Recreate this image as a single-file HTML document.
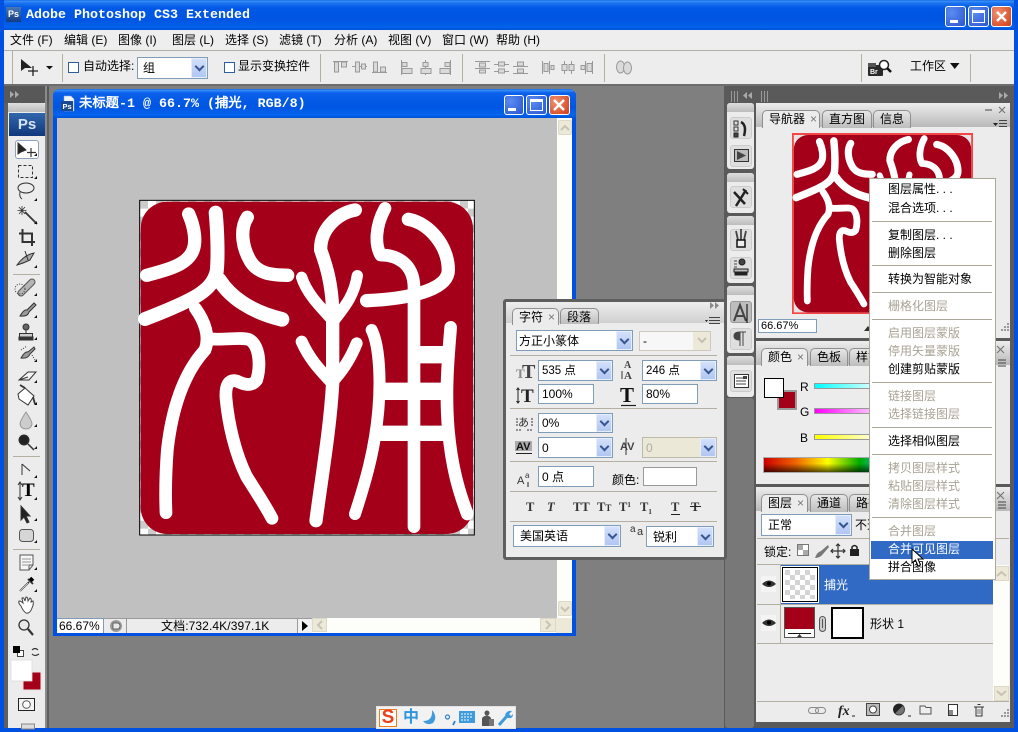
<!DOCTYPE html>
<html><head><meta charset="utf-8"><title>Adobe Photoshop CS3 Extended</title>
<style>
html,body{margin:0;padding:0}
body{width:1018px;height:732px;overflow:hidden;position:relative;background:#7f7f7f;font:12px/14px "Liberation Sans","WenQuanYi Zen Hei","Noto Sans CJK SC",sans-serif;color:#000}
div,span,b,i{box-sizing:border-box}
.a{position:absolute}
.t{position:absolute;white-space:nowrap;line-height:14px}
svg{position:absolute;overflow:visible}
.sel{position:absolute;background:#fff;border:1px solid #7f9db9}
.sel span{position:absolute;left:3px;top:50%;margin-top:-7px;white-space:nowrap;font-size:12px;line-height:14px}
.sel b{position:absolute;right:0;top:0;bottom:0;width:16px;background:linear-gradient(#d3e0fb,#b1c6f3);border:1px solid #e6eefc}
.sel b:after{content:"";position:absolute;left:4px;top:50%;margin-top:-5px;width:5px;height:5px;border-right:2px solid #37558f;border-bottom:2px solid #37558f;transform:rotate(45deg)}
.inp{position:absolute;background:#fff;border:1px solid #7f9db9}
.inp span{position:absolute;left:3px;top:50%;margin-top:-7px;white-space:nowrap}
.sep{position:absolute;height:1px;background:#b3afa3}
.vs{position:absolute;width:1px;background:#b3afa3;top:54px;height:28px}
.btn{position:absolute;border-radius:3px;border:1px solid #fff}
.panel{position:absolute;background:#ececec;left:756px;width:254px}
.head{position:absolute;left:0;right:0;top:0;height:24px;background:linear-gradient(#ededed,#b9b9b9)}
.tab{position:absolute;height:18px;border:1px solid #8f8f8f;border-bottom:0;border-radius:5px 5px 0 0;background:linear-gradient(#e6e6e6,#bdbdbd);font-size:12px;line-height:16px;padding-left:6px;white-space:nowrap}
.tab.on{background:#ececec}
.tab i{font-style:normal;color:#777;margin-left:5px}
.menu{position:absolute;left:869px;top:178px;width:127px;height:402px;background:#fff;border:1px solid #aca899;z-index:20}
.menu .m{position:absolute;left:18px;white-space:nowrap;line-height:14px}
.menu .g{color:#a7a394}
.menu .s{position:absolute;left:2px;right:3px;height:1px;background:#aca899}
.strip{position:absolute;left:727px;width:27px;background:#ececec;border-radius:3px}
.strip .grab{position:absolute;left:0;right:0;top:0;height:9px;background:linear-gradient(#dedede,#bcbcbc);border-radius:3px 3px 0 0}
.ib{position:absolute;left:3px;width:22px;height:22px;border:1px solid #ccc;border-radius:3px;background:#dfdfdf}
</style></head><body>

<!-- title bar -->
<div class="a" style="left:0;top:0;width:1018px;height:30px;background:linear-gradient(#0a5fe0 0,#3b91f7 1px,#1c74f0 3px,#0058e6 8px,#0055e2 20px,#0262ea 27px,#0050d8 30px)"></div>
<div class="a" style="left:0;top:0;width:4px;height:732px;background:#0050e2"></div>
<div class="a" style="left:1014px;top:0;width:4px;height:732px;background:#0050e2"></div>
<div class="a" style="left:0;top:728px;width:1018px;height:4px;background:#0050e2"></div>
<div class="a" style="left:6px;top:7px;width:15px;height:15px;background:linear-gradient(#4a78b6,#123c80);color:#fff;font:bold 9px/15px 'Liberation Sans';text-align:center">Ps</div>
<div class="t" style="left:26px;top:9px;color:#fff;font:bold 13.33px/14px 'Liberation Mono',monospace">Adobe Photoshop CS3 Extended</div>
<div class="btn" style="left:945px;top:6px;width:21px;height:21px;background:radial-gradient(circle at 30% 30%,#5a8cf0,#2a55d0)"><div class="a" style="left:4px;top:13px;width:8px;height:3px;background:#fff"></div></div>
<div class="btn" style="left:968px;top:6px;width:21px;height:21px;background:radial-gradient(circle at 30% 30%,#5a8cf0,#2a55d0)"><div class="a" style="left:3px;top:3px;width:13px;height:13px;border:1px solid #fff;border-top:3px solid #fff"></div></div>
<div class="btn" style="left:991px;top:6px;width:21px;height:21px;background:radial-gradient(circle at 30% 30%,#ef9070,#d03c18)"><svg style="left:0;top:0" width="19" height="19"><path d="M5 5L14 14M14 5L5 14" stroke="#fff" stroke-width="2.4"/></svg></div>

<!-- menu bar -->
<div class="a" style="left:4px;top:30px;width:1010px;height:21px;background:#eeeeee;border-bottom:1px solid #b0b0a8"></div>
<div class="t" style="left:10px;top:33px">文件 (F)</div>
<div class="t" style="left:64px;top:33px">编辑 (E)</div>
<div class="t" style="left:118px;top:33px">图像 (I)</div>
<div class="t" style="left:172px;top:33px">图层 (L)</div>
<div class="t" style="left:225px;top:33px">选择 (S)</div>
<div class="t" style="left:279px;top:33px">滤镜 (T)</div>
<div class="t" style="left:334px;top:33px">分析 (A)</div>
<div class="t" style="left:388px;top:33px">视图 (V)</div>
<div class="t" style="left:442px;top:33px">窗口 (W)</div>
<div class="t" style="left:496px;top:33px">帮助 (H)</div>

<!-- options bar -->
<div class="a" style="left:4px;top:51px;width:1010px;height:33px;background:#ededed"></div>
<div class="a" style="left:4px;top:84px;width:1010px;height:2px;background:#6d6d6d"></div>
<div class="a" style="left:12px;top:51px;width:1px;height:33px;background:#b3afa3"></div>
<div class="vs" style="left:62px"></div><div class="vs" style="left:320px"></div><div class="vs" style="left:462px"></div><div class="vs" style="left:604px"></div><div class="vs" style="left:861px"></div><div class="vs" style="left:970px"></div>
<svg style="left:0;top:0" width="60" height="85"><path d="M21 59L21 71L25 68L32 68Z" fill="#222"/><path d="M33 66V76M28 71H38" stroke="#222" stroke-width="1.3"/><path d="M46 66H53L49.500 69.500Z" fill="#111"/></svg>
<div class="a" style="left:68px;top:62px;width:11px;height:11px;background:#fff;border:1px solid #2f5f9a"></div>
<div class="t" style="left:83px;top:59px">自动选择:</div>
<div class="sel" style="left:137px;top:57px;width:71px;height:22px"><span style="left:5px">组</span><b style="width:16px"></b></div>
<div class="a" style="left:224px;top:62px;width:11px;height:11px;background:#fff;border:1px solid #2f5f9a"></div>
<div class="t" style="left:238px;top:59px">显示变换控件</div>
<svg style="left:325px;top:52px" width="320" height="30" fill="#dadada" stroke="#999" stroke-width="1">
<g transform="translate(8,9)"><path d="M0 .5H15" fill="none"/><rect x="1.500" y="1" width="4" height="10"/><rect x="8.500" y="1" width="5" height="5"/></g>
<g transform="translate(27,9)"><path d="M0 5.500H15" fill="none"/><rect x="3.500" y="1" width="4" height="10"/><rect x="9.500" y="3" width="4" height="5"/></g>
<g transform="translate(47,9)"><path d="M0 11.500H15" fill="none"/><rect x="1.500" y="1" width="4" height="10"/><rect x="8.500" y="6" width="5" height="5"/></g>
<g transform="translate(76,8)"><path d="M.5 0V15" fill="none"/><rect x="1" y="8.500" width="10" height="5"/><rect x="1" y="2.500" width="5" height="4"/></g>
<g transform="translate(95,8)"><path d="M5.500 0V15" fill="none"/><rect x="1" y="8.500" width="10" height="5"/><rect x="3" y="2.500" width="5" height="4"/></g>
<g transform="translate(114,8)"><path d="M11.500 0V15" fill="none"/><rect x="1" y="8.500" width="10" height="5"/><rect x="6" y="2.500" width="5" height="4"/></g>
<g transform="translate(150,9)"><path d="M0 .5H15M0 7.500H15" fill="none"/><rect x="4.500" y="2" width="6" height="4"/><rect x="4.500" y="9" width="6" height="3"/></g>
<g transform="translate(169,9)"><path d="M0 3.500H15M0 10.500H15" fill="none"/><rect x="4.500" y="1" width="6" height="4"/><rect x="4.500" y="8" width="6" height="4"/></g>
<g transform="translate(188,9)"><path d="M0 5.500H15M0 12.500H15" fill="none"/><rect x="4.500" y="1" width="6" height="4"/><rect x="4.500" y="8" width="6" height="4"/></g>
<g transform="translate(217,8)"><path d="M.5 1V14M7.500 1V14" fill="none"/><rect x="2" y="3.500" width="4" height="8"/><rect x="9" y="5.500" width="3" height="4"/></g>
<g transform="translate(236,8)"><path d="M3.500 1V14M10.500 1V14" fill="none"/><rect x="1" y="4.500" width="5" height="6"/><rect x="8" y="4.500" width="5" height="6"/></g>
<g transform="translate(255,8)"><path d="M5.500 1V14M12.500 1V14" fill="none"/><rect x="1" y="5.500" width="4" height="4"/><rect x="7" y="3.500" width="5" height="8"/></g>
<g transform="translate(291,8)"><ellipse cx="4.500" cy="7" rx="4" ry="6"/><ellipse cx="11.500" cy="8" rx="4" ry="6"/></g>
</svg>
<svg style="left:868px;top:59px" width="26" height="18"><rect x="0" y="6" width="15" height="11" rx="1" fill="#2a2a2a"/><rect x="0" y="4" width="8" height="4" fill="#555"/><text x="2" y="15" font-family="Liberation Sans" font-weight="bold" font-size="7" fill="#fff">Br</text><circle cx="16" cy="6" r="4.500" fill="#fff" stroke="#222" stroke-width="1.5"/><path d="M19 9L23 13" stroke="#111" stroke-width="2.500"/></svg>
<div class="t" style="left:910px;top:59px">工作区</div>
<svg style="left:950px;top:63px" width="10" height="7"><path d="M0 0H9.500L4.750 6Z" fill="#111"/></svg>

<!-- toolbox -->
<div class="a" style="left:4px;top:86px;width:45px;height:642px;background:#5f5f5f"></div>
<div class="a" style="left:4px;top:86px;width:45px;height:17px;background:#585858"></div>
<svg style="left:10px;top:91px" width="12" height="8"><path d="M0 0L4 3.500L0 7ZM5 0L9 3.500L5 7Z" fill="#aaa"/></svg>
<div class="a" style="left:8px;top:103px;width:37px;height:625px;background:#ececec"></div>
<div class="a" style="left:8px;top:103px;width:37px;height:9px;background:linear-gradient(#dedede,#bcbcbc);border-radius:3px 3px 0 0"></div>
<div class="a" style="left:45px;top:86px;width:2px;height:642px;background:#8a8a8a"></div>
<div class="a" style="left:9px;top:113px;width:36px;height:23px;background:linear-gradient(#3166ac,#11387c);color:#d8e4f5;font:bold 15px/23px 'Liberation Sans';text-align:center">Ps</div>
<div class="a" style="left:15px;top:140px;width:24px;height:19px;background:#fff;border:1px solid #8da2b8;border-radius:3px"></div>
<svg style="left:0;top:0;z-index:2" width="60" height="732" fill="none" stroke="#333" stroke-width="1">
<path d="M18 143V154L21 152L26 150Z" fill="#222"/><path d="M31 148V157M27 152.500H36" stroke-width="1.200"/>
<rect x="18.500" y="165.500" width="14" height="12" stroke-dasharray="3 2"/>
<ellipse cx="26" cy="188" rx="8" ry="5"/><path d="M20 192Q19 197 22 199"/>
<path d="M25 212L37 224" stroke-width="1.800"/><path d="M22 206V215M17.500 210.500H26.500M19 207L25 214M25 207L19 214" stroke-width=".8"/>
<path d="M19 233.500H32V246M22.500 229V242H35" stroke-width="2"/>
<path d="M17 265Q24 255 34 253L30 260Q24 263 17 265Z" fill="#aaa"/><path d="M25 251L28 260"/>
<path d="M21 293L32 282" stroke="#555" stroke-width="7" stroke-linecap="round"/><path d="M21 293L32 282" stroke="#b5b5b5" stroke-width="5" stroke-linecap="round"/><circle cx="20" cy="289" r="5" stroke-dasharray="1 1.500"/>
<path d="M20 316Q24 309 27 310L34 303L36 305L29 312Q28 317 20 316Z" fill="#999"/>
<circle cx="26" cy="327" r="3" fill="#666"/><path d="M26 330V333"/><rect x="19.500" y="333.500" width="13" height="4" fill="#ccc"/><rect x="19" y="337" width="14" height="3" fill="#333"/>
<path d="M21 358Q25 351 28 352L34 347L35 349L30 354Q28 359 21 358Z" fill="#999"/><path d="M21 350L27 346M32 355L35 360" stroke-dasharray="1 1.500"/>
<path d="M19 380L28 372H36L29 380ZM19 380L28 377" fill="#f4f4f4"/>
<path d="M18 394L25 388L34 396L28 405L19 399Z" fill="#fff"/><path d="M25 388L20 385" stroke-width="1.800"/><path d="M33 397L35 404" stroke-width="1.800"/>
<path d="M26 412Q20 421 20 424Q21 429 26 429Q31 429 32 424Q32 421 26 412Z" fill="#ccc" stroke="#999"/>
<circle cx="24" cy="440" r="5" fill="#222"/><path d="M28 444L34 450" stroke-width="1.500"/>
<path d="M22 464V475M22 464L30 471"/>
<path d="M20 483V499M18 485L20 482L22 485M18 497L20 500L22 497" stroke-width="1"/>
<path d="M21 506V520L24 517L27 523L29 522L26 516L30 516Z" fill="#222"/>
<rect x="19.500" y="529.500" width="14" height="12" rx="3" fill="#d6d6d6" stroke="#555"/>
<path d="M20 555H33V565L29 570H20Z" fill="#f6f6f6" stroke="#555"/><path d="M22 559H31M22 562H31M22 565H28" stroke="#777" stroke-width=".8"/><path d="M29 570V565H33" stroke="#555"/>
<path d="M20 591L29 582M28 579L33 584" stroke-width="1.800"/><path d="M30 578L33 581" stroke="#000" stroke-width="3.500"/><path d="M20 591L28 583" stroke="#fff" stroke-width=".6"/>
<path d="M21 606Q18 603 19 601Q21 601 23 603L22 598Q24 597 25 601L26 597Q28 597 28 601L30 598Q32 599 31 602L33 601Q34 604 32 608Q30 614 26 613Q23 611 21 606Z" fill="#fff" stroke="#444"/>
<circle cx="24" cy="625" r="5" fill="#e8e8e8" stroke-width="1.300"/><path d="M28 629L33 635" stroke-width="2.200"/>
<path d="M32 650Q35 647 38 650M39 654Q35 657 32 654" stroke-width="1.200"/>
<rect x="17.500" y="650.500" width="6" height="6" fill="#fff" stroke="#444"/><rect x="13" y="646" width="7" height="7" fill="#000" stroke="none"/>
<rect x="22.500" y="671.500" width="19" height="19" fill="#a50019" stroke="#e8e8e8" stroke-width="2"/>
<rect x="11" y="660" width="21" height="21" fill="#fff" stroke="#ddd" stroke-width=".8"/>
<rect x="18.500" y="698.500" width="16" height="12" fill="#f4f4f4" stroke="#222"/><circle cx="26.500" cy="704.500" r="3.800" fill="#fff" stroke="#555"/>
<rect x="21.500" y="724" width="13" height="5" fill="#ddd" stroke="#888"/>
</svg>
<svg style="left:0;top:0;z-index:2" width="60" height="732" fill="#111">
<path d="M37 156v-3l-3 3zM37 179v-3l-3 3zM37 201v-3l-3 3zM37 224v-3l-3 3zM37 268v-3l-3 3zM37 296v-3l-3 3zM37 318v-3l-3 3zM37 340v-3l-3 3zM37 362v-3l-3 3zM37 383v-3l-3 3zM37 405v-3l-3 3zM37 427v-3l-3 3zM37 449v-3l-3 3zM37 478v-3l-3 3zM37 500v-3l-3 3zM37 521v-3l-3 3zM37 543v-3l-3 3zM37 570v-3l-3 3zM37 592v-3l-3 3z"/>
<rect x="13" y="274" width="27" height="1" fill="#b3afa3"/><rect x="13" y="456" width="27" height="1" fill="#b3afa3"/><rect x="13" y="549" width="27" height="1" fill="#b3afa3"/>
</svg>
<div class="t" style="left:22px;top:481px;font:bold 19px/20px 'Liberation Serif',serif;z-index:3">T</div>

<!-- document window -->
<div class="a" style="left:53px;top:89px;width:523px;height:547px;background:#0050e2;border-radius:7px 7px 0 0"></div>
<div class="a" style="left:53px;top:89px;width:523px;height:29px;border-radius:7px 7px 0 0;background:linear-gradient(#0a5fe0 0,#3b91f7 1px,#0a60ea 4px,#0055e2 18px,#0264ec 26px,#0050d8 29px)"></div>
<svg style="left:61px;top:96px" width="14" height="16"><path d="M3 0H10L13 3V15H3Z" fill="#f0f4fa" stroke="#8fa8cc" stroke-width=".5"/><rect x="0" y="5" width="12" height="10" fill="#1c4a8c"/><text x="1.500" y="13" font-family="Liberation Sans" font-weight="bold" font-size="7.500" fill="#fff">Ps</text></svg>
<div class="t" style="left:79px;top:98px;color:#fff;font:bold 13.33px/14px 'Liberation Mono','WenQuanYi Zen Hei',monospace">未标题-1 @ 66.7% (捕光, RGB/8)</div>
<div class="btn" style="left:504px;top:95px;width:20px;height:20px;background:radial-gradient(circle at 30% 30%,#5a8cf0,#2a55d0)"><div class="a" style="left:3px;top:12px;width:8px;height:3px;background:#fff"></div></div>
<div class="btn" style="left:526px;top:95px;width:21px;height:20px;background:radial-gradient(circle at 30% 30%,#5a8cf0,#2a55d0)"><div class="a" style="left:3px;top:3px;width:13px;height:12px;border:1px solid #fff;border-top:3px solid #fff"></div></div>
<div class="btn" style="left:549px;top:95px;width:21px;height:20px;background:radial-gradient(circle at 30% 30%,#ef9070,#d03c18)"><svg style="left:0;top:0" width="19" height="18"><path d="M4 4L14 14M14 4L4 14" stroke="#fff" stroke-width="2.400"/></svg></div>
<div class="a" style="left:57px;top:118px;width:500px;height:500px;background:#c0c0c0"></div>
<div class="a" style="left:557px;top:118px;width:15px;height:500px;background:#fdfdf9"></div>
<div class="a" style="left:558px;top:120px;width:14px;height:15px;background:#ece9d8;border:1px solid #dcd9c8;border-radius:2px"></div>
<div class="a" style="left:558px;top:601px;width:14px;height:15px;background:#ece9d8;border:1px solid #dcd9c8;border-radius:2px"></div>
<svg style="left:558px;top:120px" width="14" height="500" fill="none" stroke="#c7c4b4" stroke-width="2"><path d="M3 10L7 6L11 10M3 487L7 491L11 487"/></svg>
<!-- status -->
<div class="a" style="left:57px;top:618px;width:515px;height:15px;background:#ececec;border-top:1px solid #9a9a9a"></div>
<div class="a" style="left:57px;top:618px;width:47px;height:15px;background:#fff;border-right:1px solid #7f9db9;border-top:1px solid #7f9db9;font-size:12px;line-height:14px;padding-left:2px">66.67%</div>
<div class="a" style="left:126px;top:619px;width:1px;height:14px;background:#9a9a9a"></div>
<svg style="left:109px;top:619px" width="14" height="14"><circle cx="7" cy="7" r="6" fill="#9a9a9a"/><path d="M4 10V4H8Q11 4 11 7Q11 10 8 10Z" fill="#e8e8e8" stroke="#444" stroke-width=".7"/></svg>
<div class="t" style="left:161px;top:619px;letter-spacing:.1px">文档:732.4K/397.1K</div>
<div class="a" style="left:297px;top:619px;width:15px;height:14px;background:#f2f2f2;border-left:1px solid #9a9a9a"></div>
<svg style="left:302px;top:621px" width="7" height="11"><path d="M0 0L6 5L0 10Z" fill="#000"/></svg>
<div class="a" style="left:312px;top:618px;width:260px;height:15px;background:#fdfdf9"></div>
<div class="a" style="left:312px;top:618px;width:15px;height:14px;background:#ece9d8;border:1px solid #dcd9c8"></div>
<div class="a" style="left:540px;top:618px;width:16px;height:14px;background:#ece9d8;border:1px solid #dcd9c8"></div>
<div class="a" style="left:556px;top:618px;width:16px;height:15px;background:#ece9d8"></div>
<svg style="left:312px;top:618px" width="260" height="15" fill="none" stroke="#c7c4b4" stroke-width="2"><path d="M10 3L6 7L10 11M234 3L238 7L234 11"/></svg>

<!-- canvas -->
<svg style="left:130px;top:190px" width="360" height="360" viewBox="0 0 1080 1080">
<defs><pattern id="ck" width="48" height="48" patternUnits="userSpaceOnUse" x="30" y="32"><rect width="48" height="48" fill="#fff"/><rect width="24" height="24" fill="#ccc"/><rect x="24" y="24" width="24" height="24" fill="#ccc"/></pattern></defs>
<rect x="29" y="31" width="1004" height="1004" fill="url(#ck)" stroke="#000" stroke-width="3"/>
<rect x="32" y="35" width="997" height="997" rx="80" fill="#a50019"/>
<g fill="none" stroke="#fff" stroke-width="40" stroke-linecap="round" stroke-linejoin="round">
<path d="M176 72C195 115 198 155 190 178C175 225 110 240 50 256"/>
<path d="M257 68C262 120 265 200 260 245C245 300 205 325 45 387" stroke-width="42"/>
<path d="M268 270C300 320 360 365 456 388" stroke-width="44"/>
<path d="M352 82C330 115 335 170 362 215C385 250 420 255 473 256"/>
<path d="M196 355C225 395 240 440 225 480C160 550 125 660 112 780C106 860 106 920 108 968" stroke-width="38"/>
<path d="M245 447C290 450 340 440 360 450C390 470 392 530 380 570C365 590 345 585 320 573C300 568 285 580 288 625C295 700 315 790 350 860C375 900 405 945 426 985" stroke-width="38"/>
<path d="M676 60C620 70 570 120 572 180C590 230 605 280 608 360V580C600 720 575 860 558 992"/>
<path d="M515 262C530 310 570 350 605 388" stroke-width="34"/><path d="M682 257C672 320 640 355 612 392" stroke-width="34"/>
<path d="M515 455C540 510 570 540 605 578" stroke-width="36"/><path d="M680 460C660 510 635 545 610 572" stroke-width="36"/>
<path d="M765 55C735 110 735 165 752 195C800 195 850 220 852 290V1010" stroke-width="38"/>
<path d="M835 88C900 100 955 170 955 240C955 290 870 325 710 332" stroke-width="40"/>
<path d="M725 420C750 470 752 580 745 660C735 780 705 880 675 972" stroke-width="36"/>
<path d="M962 412C955 500 945 600 955 720C965 830 985 900 1012 972" stroke-width="38"/>
<path d="M745 604H950" stroke-width="52" stroke-linecap="butt"/><path d="M745 730H950" stroke-width="46" stroke-linecap="butt"/><path d="M860 494H945" stroke-width="52" stroke-linecap="butt"/>
</g></svg>

<!-- right dock -->
<div class="a" style="left:724px;top:86px;width:290px;height:642px;background:#5a5a5a"></div>
<div class="a" style="left:725px;top:398px;width:29px;height:330px;background:#787878;border-radius:3px"></div>
<svg style="left:724px;top:86px" width="290" height="17"><path d="M7.500 5V16M10.500 5V16M13.500 5V16M37.500 5V16M40.500 5V16M43.500 5V16" stroke="#9a9a9a"/><path d="M28 6L24 9.500L28 13ZM23 6L19 9.500L23 13Z" fill="#aaa"/><path d="M275 6L279 9.500L275 13ZM280 6L284 9.500L280 13Z" fill="#aaa"/></svg>
<div class="strip" style="top:103px;height:66px"><div class="grab"></div><div class="ib" style="top:14px"></div><div class="ib" style="top:42px"></div></div>
<div class="strip" style="top:173px;height:40px"><div class="grab"></div><div class="ib" style="top:13px"></div></div>
<div class="strip" style="top:216px;height:67px"><div class="grab"></div><div class="ib" style="top:13px"></div><div class="ib" style="top:41px"></div></div>
<div class="strip" style="top:286px;height:67px"><div class="grab"></div><div class="ib" style="top:15px;background:#bdbdbd;border-color:#999"></div><div class="ib" style="top:42px"></div></div>
<div class="strip" style="top:356px;height:41px"><div class="grab"></div><div class="ib" style="top:14px"></div></div>
<svg style="left:727px;top:103px;z-index:2" width="27" height="300" fill="none" stroke="#222">
<rect x="7" y="18" width="4" height="4" stroke="#333"/><rect x="7" y="24" width="4" height="4" stroke="#333"/><rect x="7" y="30" width="4" height="4" fill="#444"/><path d="M14 19Q20 22 17 33" stroke-width="2.500"/>
<rect x="7.500" y="46.500" width="14" height="12" fill="#bbb" stroke="#333"/><path d="M10 48V57L19 52.500Z" fill="#444" stroke="none"/>
<path d="M7 89L18 101M19 87L9 103" stroke-width="2.500"/><path d="M16 86L21 91" stroke-width="2"/>
<path d="M9 128L11 137M19 128L17 137M14 126V137" stroke="#444" stroke-width="1.800"/><rect x="10" y="137" width="8" height="7" fill="#eee" stroke="#111" stroke-width="1.500"/>
<circle cx="15" cy="159" r="3" fill="#444"/><path d="M7 158H10M7 161H10M7 164H10" stroke="#444"/><rect x="7" y="166" width="14" height="3" fill="#bbb"/><rect x="8" y="169" width="12" height="3" fill="#222"/>
<path d="M7 218L13 202L19 218M9 213H17" stroke="#444" stroke-width="2"/><path d="M20 201V220" stroke="#000"/>
<path d="M16 229V243M13 229V243M12 229H19M13 229Q7 229 7 233Q7 237 13 237" fill="#444" stroke="#444"/>
<rect x="7.500" y="271.500" width="14" height="13" fill="#fff" stroke="#333"/><path d="M9 275H16M9 278H19M9 281H19" stroke="#444"/><rect x="16" y="273" width="4" height="3" fill="#444" stroke="none"/>
</svg>

<!-- navigator panel -->
<div class="panel" style="top:103px;height:235px;border-radius:3px 3px 0 0"><div class="head"></div>
<div class="tab on" style="left:6px;top:7px;width:58px">导航器<i>×</i></div>
<div class="tab" style="left:66px;top:7px;width:50px">直方图</div>
<div class="tab" style="left:117px;top:7px;width:38px">信息</div>
</div>
<svg style="left:985px;top:104px" width="25" height="26"><path d="M0 6H7" stroke="#777" stroke-width="1.500"/><path d="M14 3L20 9M20 3L14 9" stroke="#777" stroke-width="1.200"/><path d="M8 19H13L10.500 22Z" fill="#222"/><path d="M14 16.500H22M14 19.500H22M14 22.500H22" stroke="#444"/></svg>
<div class="a" style="left:792px;top:133px;width:181px;height:181px;background:#fff;border:2px solid #f44646"></div>
<svg style="left:794px;top:135px" width="177" height="177" viewBox="33 35 995 995">
<rect x="32" y="35" width="997" height="997" fill="#e4e4e4"/>
<rect x="32" y="35" width="997" height="997" rx="80" fill="#a50019"/>
<g fill="none" stroke="#fff" stroke-width="40" stroke-linecap="round" stroke-linejoin="round">
<path d="M176 72C195 115 198 155 190 178C175 225 110 240 50 256"/>
<path d="M257 68C262 120 265 200 260 245C245 300 205 325 45 387" stroke-width="42"/>
<path d="M268 270C300 320 360 365 456 388" stroke-width="44"/>
<path d="M352 82C330 115 335 170 362 215C385 250 420 255 473 256"/>
<path d="M196 355C225 395 240 440 225 480C160 550 125 660 112 780C106 860 106 920 108 968" stroke-width="38"/>
<path d="M245 447C290 450 340 440 360 450C390 470 392 530 380 570C365 590 345 585 320 573C300 568 285 580 288 625C295 700 315 790 350 860C375 900 405 945 426 985" stroke-width="38"/>
<path d="M676 60C620 70 570 120 572 180C590 230 605 280 608 360V580C600 720 575 860 558 992"/>
<path d="M515 262C530 310 570 350 605 388" stroke-width="34"/><path d="M682 257C672 320 640 355 612 392" stroke-width="34"/>
<path d="M765 55C735 110 735 165 752 195C800 195 850 220 852 290V1010" stroke-width="38"/>
<path d="M835 88C900 100 955 170 955 240C955 290 870 325 710 332"/>
</g></svg>
<div class="inp" style="left:758px;top:319px;width:59px;height:14px;font-size:11px"><span style="left:2px;font-size:11px">66.67%</span></div>
<svg style="left:864px;top:326px" width="8" height="6"><path d="M0 5L4 0L8 5Z" fill="#333"/></svg>
<svg style="left:998px;top:322px" width="12" height="12" fill="#999"><path d="M9 1h2v2h-2zM6 4h2v2h-2zM9 4h2v2h-2zM3 7h2v2h-2zM6 7h2v2h-2zM9 7h2v2h-2z"/></svg>

<!-- color panel -->
<div class="panel" style="top:341px;height:143px;border-radius:3px 3px 0 0"><div class="head"></div>
<div class="tab on" style="left:5px;top:7px;width:47px">颜色<i>×</i></div>
<div class="tab" style="left:54px;top:7px;width:38px">色板</div>
<div class="tab" style="left:93px;top:7px;width:40px">样式</div>
</div>
<svg style="left:996px;top:341px" width="14" height="26"><path d="M1 5L8 12M8 5L1 12" stroke="#777" stroke-width="1.200"/><path d="M2 22H10M2 19H10M2 25H10" stroke="#444"/></svg>
<div class="a" style="left:777px;top:390px;width:20px;height:20px;background:#a50019;border:2px solid #9a9a9a;outline:1px solid #eee"></div>
<div class="a" style="left:764px;top:378px;width:20px;height:20px;background:#fff;border:1px solid #000"></div>
<div class="t" style="left:800px;top:380px">R</div><div class="t" style="left:800px;top:405px">G</div><div class="t" style="left:800px;top:431px">B</div>
<div class="a" style="left:814px;top:383px;width:56px;height:6px;background:linear-gradient(90deg,#0ff,#cff);border:1px solid #999"></div>
<div class="a" style="left:814px;top:408px;width:56px;height:6px;background:linear-gradient(90deg,#f0f,#fbf);border:1px solid #999"></div>
<div class="a" style="left:814px;top:434px;width:56px;height:6px;background:linear-gradient(90deg,#ff0,#ffc);border:1px solid #999"></div>
<div class="a" style="left:763px;top:457px;width:225px;height:16px;border:1px solid #aaa;background:linear-gradient(90deg,#c00,#e60,#ff0,#0a0,#0cf,#00f,#f0f,#f00)"></div>
<div class="a" style="left:764px;top:458px;width:223px;height:14px;background:linear-gradient(#fff0 40%,#000a)"></div>

<!-- layers panel -->
<div class="panel" style="top:487px;height:235px;border-radius:3px 3px 0 0"><div class="head"></div>
<div class="tab on" style="left:5px;top:7px;width:47px">图层<i>×</i></div>
<div class="tab" style="left:54px;top:7px;width:38px">通道</div>
<div class="tab" style="left:93px;top:7px;width:40px">路径</div>
</div>
<svg style="left:996px;top:487px" width="14" height="26"><path d="M1 5L8 12M8 5L1 12" stroke="#777" stroke-width="1.200"/><path d="M2 15H10M2 18H10M2 21H10" stroke="#444"/></svg>
<div class="sel" style="left:761px;top:514px;width:91px;height:22px"><span style="left:6px">正常</span><b></b></div>
<div class="t" style="left:855px;top:518px">不透明度</div>
<div class="sep" style="left:757px;top:538px;width:252px"></div>
<div class="t" style="left:764px;top:545px">锁定:</div>
<svg style="left:795px;top:542px" width="70" height="20"><rect x="2.500" y="2.500" width="11" height="11" fill="#fff" stroke="#777"/><path d="M3 3h5v5h-5zM8 8h5v5h-5z" fill="#aaa"/><path d="M20 16Q22 10 26 9L33 3L34 5L28 12Q25 16 20 16Z" fill="#777"/><path d="M43 2V16M36 9H50M41 4L43 2L45 4M41 14L43 16L45 14M38 7L36 9L38 11M48 7L50 9L48 11" stroke="#333" fill="none" stroke-width="1.200"/><rect x="55" y="7" width="9" height="7" fill="#222"/><path d="M57 7V5Q59.500 2 62 5V7" stroke="#222" fill="none" stroke-width="1.500"/></svg>
<div class="sep" style="left:757px;top:564px;width:236px"></div>
<div class="a" style="left:781px;top:565px;width:212px;height:39px;background:#316ac5"></div>
<div class="a" style="left:780px;top:565px;width:1px;height:78px;background:#b3afa3"></div>
<div class="sep" style="left:757px;top:604px;width:236px"></div>
<div class="sep" style="left:757px;top:643px;width:236px"></div>
<div class="a" style="left:761px;top:576px;width:15px;height:16px;background:#f4f4f4"></div>
<div class="a" style="left:761px;top:615px;width:15px;height:16px;background:#f4f4f4"></div>
<svg style="left:761px;top:576px" width="16" height="56"><path d="M1 8Q8 1 15 8Q8 14 1 8Z" fill="#333"/><circle cx="8" cy="7.500" r="2" fill="#000"/><path d="M1 47Q8 40 15 47Q8 53 1 47Z" fill="#333"/><circle cx="8" cy="46.500" r="2" fill="#000"/></svg>
<div class="a" style="left:782px;top:567px;width:36px;height:35px;background:#fff;border:1px solid #000;outline:1px solid #fff"></div>
<svg style="left:785px;top:570px" width="30" height="29"><defs><pattern id="ck2" width="10" height="10" patternUnits="userSpaceOnUse"><rect width="10" height="10" fill="#fff"/><rect width="5" height="5" fill="#d4d4d4"/><rect x="5" y="5" width="5" height="5" fill="#d4d4d4"/></pattern></defs><rect width="30" height="29" fill="url(#ck2)"/></svg>
<div class="t" style="left:824px;top:578px;color:#fff">捕光</div>
<div class="a" style="left:784px;top:607px;width:31px;height:31px;background:#fff;border:1px solid #555"></div>
<div class="a" style="left:785px;top:608px;width:29px;height:21px;background:#a50019"></div>
<svg style="left:785px;top:629px" width="29" height="9"><path d="M3 4.500H26" stroke="#111"/><path d="M12 8L14.500 5L17 8Z" fill="#333"/></svg>
<svg style="left:818px;top:615px" width="9" height="18"><rect x="1.500" y="1.500" width="6" height="15" rx="3" fill="#ccc" stroke="#555"/><path d="M4.500 4V13" stroke="#555"/></svg>
<div class="a" style="left:831px;top:607px;width:33px;height:32px;background:#fff;border:2px solid #000"></div>
<div class="t" style="left:870px;top:617px">形状 1</div>
<div class="a" style="left:993px;top:565px;width:16px;height:136px;background:#fdfdf9"></div>
<div class="a" style="left:994px;top:566px;width:15px;height:15px;background:#ece9d8;border:1px solid #dcd9c8"></div>
<div class="a" style="left:994px;top:686px;width:15px;height:15px;background:#ece9d8;border:1px solid #dcd9c8"></div>
<svg style="left:994px;top:566px" width="15" height="136" fill="none" stroke="#c7c4b4" stroke-width="2"><path d="M3 10L7.500 6L12 10M3 125L7.500 129L12 125"/></svg>
<div class="sep" style="left:757px;top:701px;width:252px"></div>
<svg style="left:806px;top:702px" width="204" height="20" fill="none" stroke="#444">
<rect x="2.500" y="5.500" width="10" height="6" rx="3" stroke="#888"/><rect x="9.500" y="5.500" width="10" height="6" rx="3" stroke="#888"/>
<text x="32" y="13" font-family="Liberation Serif" font-style="italic" font-weight="bold" font-size="14" fill="#222" stroke="none">fx</text><path d="M46 14H49" stroke="#222"/>
<rect x="60.500" y="1.500" width="13" height="12" fill="#bbb"/><circle cx="67" cy="7.500" r="3.500" fill="#fff"/>
<circle cx="93" cy="7.500" r="5.500" fill="#777"/><path d="M89 11.500A5.500 5.500 0 0 1 97 3.500Z" fill="#222" stroke="none"/><path d="M102 14H105" stroke="#222"/>
<path d="M114 4H119L120 5.500H125V12H114Z" fill="#eee" stroke="#555"/>
<rect x="142.500" y="2.500" width="9" height="11" fill="#fff" stroke="#333"/><rect x="143" y="8" width="4" height="5" fill="#888" stroke="none"/>
<path d="M168 5H178M170 5V14H176V5M171.500 2.500H174.500" stroke="#333"/><path d="M172 7V12M174 7V12" stroke="#777"/>
</svg>
<svg style="left:998px;top:708px" width="12" height="12" fill="#999"><path d="M9 1h2v2h-2zM6 4h2v2h-2zM9 4h2v2h-2zM3 7h2v2h-2zM6 7h2v2h-2zM9 7h2v2h-2z"/></svg>

<!-- character panel -->
<div class="a" style="left:503px;top:299px;width:224px;height:261px;background:#ececec;border:3px solid #5e5e5e;border-radius:3px"></div>
<div class="a" style="left:506px;top:302px;width:218px;height:21px;background:linear-gradient(#ededed,#d0d0d0)"></div>
<svg style="left:710px;top:302px" width="10" height="8"><path d="M0 0L4 3.500L0 7ZM5 0L9 3.500L5 7Z" fill="#8a8a8a"/></svg>
<div class="tab on" style="left:512px;top:308px;width:47px;height:17px;padding-left:6px">字符<i style="margin-left:5px">×</i></div>
<div class="tab" style="left:560px;top:308px;width:39px;height:16px;padding-left:6px">段落</div>
<svg style="left:700px;top:316px" width="22" height="10"><path d="M5 4H8L6.500 6Z" fill="#222"/><path d="M9 1.500H20M9 4.500H20M9 7.500H20" stroke="#444"/></svg>
<div class="sel" style="left:516px;top:330px;width:117px;height:21px"><span style="left:2px">方正小篆体</span></div>
<div class="sel" style="left:516px;top:330px;width:117px;height:21px;background:none"><b></b></div>
<div class="inp" style="left:639px;top:331px;width:72px;height:20px;border-color:#cdcabb;background:#f7f7f7"><span>-</span><div class="a" style="right:0;top:0;bottom:0;width:17px;background:#ece9d8"></div></div>
<svg style="left:695px;top:336px" width="14" height="10" fill="none"><path d="M3 2L7 6L11 2" stroke="#c4c1b1" stroke-width="2"/></svg>
<div class="sep" style="left:510px;top:355px;width:207px"></div>
<div class="sel" style="left:538px;top:360px;width:75px;height:21px"><span style="font-size:11.500px">535 点</span><b></b></div>
<div class="sel" style="left:642px;top:360px;width:75px;height:21px"><span style="font-size:11.500px">246 点</span><b></b></div>
<div class="inp" style="left:538px;top:384px;width:56px;height:20px"><span>100%</span></div>
<div class="inp" style="left:642px;top:384px;width:56px;height:20px"><span>80%</span></div>
<div class="sep" style="left:510px;top:408px;width:207px"></div>
<div class="sel" style="left:538px;top:413px;width:75px;height:20px"><span>0%</span><b></b></div>
<div class="sel" style="left:538px;top:437px;width:75px;height:21px"><span>0</span><b></b></div>
<div class="sel" style="left:642px;top:437px;width:75px;height:21px;border-color:#bdbaaa;background:#ebe8d8"><span style="color:#b0ad9f">0</span><b></b></div>
<div class="sep" style="left:510px;top:461px;width:207px"></div>
<div class="inp" style="left:538px;top:466px;width:56px;height:21px"><span>0 点</span></div>
<div class="t" style="left:612px;top:473px">颜色:</div>
<div class="a" style="left:643px;top:467px;width:54px;height:19px;background:#fff;border:1px solid #9a9a9a"></div>
<div class="sep" style="left:510px;top:491px;width:207px"></div>
<div class="sep" style="left:510px;top:521px;width:207px"></div>
<svg style="left:500px;top:295px" width="230" height="270" font-family="Liberation Serif" font-weight="bold" fill="#333">
<text x="16" y="83" font-size="13" fill="#888">T</text><text x="22" y="83" font-size="20" fill="#444">T</text>
<text x="124" y="73" font-size="10" fill="#444">A</text><path d="M122 76V84" stroke="#333"/><text x="124" y="84" font-size="11" fill="#444">A</text>
<text x="21" y="107" font-size="19" fill="#222">T</text><path d="M18 93V108M16.500 95L18 93L19.500 95M16.500 106L18 108L19.500 106" stroke="#222" fill="none"/><text x="120" y="107" font-size="21" fill="#111">T</text><path d="M121 110.500H136" stroke="#222" stroke-width="1.200"/>
<text x="18" y="131" font-size="11" font-weight="normal" font-family="WenQuanYi Zen Hei">あ</text><path d="M17 123V132M32 123V132M16 135H22M27 135H33" stroke="#333" stroke-width="1" stroke-dasharray="2 1"/>
<rect x="15" y="146" width="17" height="10" fill="#aaa"/><text x="16" y="155" font-size="11" font-family="Liberation Sans" fill="#111">AV</text><path d="M16 158.500H32" stroke="#222"/>
<text x="120" y="155" font-size="11" font-family="Liberation Sans" fill="#444">AV</text><path d="M126 143V160" stroke="#333"/>
<text x="17" y="189" font-size="11" font-family="Liberation Sans" font-weight="normal">A</text><text x="25" y="183" font-size="8" font-family="Liberation Sans" font-weight="normal">a</text><path d="M28 187V192" stroke="#222"/>
<g font-size="12.500"><text x="26" y="216">T</text><text x="47" y="216" font-style="italic">T</text><text x="73" y="216">TT</text><text x="97" y="216">T<tspan font-size="9">T</tspan></text><text x="119" y="216">T<tspan font-size="7" dy="-4">1</tspan></text><text x="140" y="216">T<tspan font-size="7" dy="3">1</tspan></text><text x="171" y="216">T</text><path d="M171 219.500H180" stroke="#222"/><text x="191" y="216">T</text><path d="M190 211.500H201" stroke="#222"/></g>
<text x="130" y="237" font-size="10" font-family="Liberation Sans" font-weight="normal">a</text><text x="137" y="240" font-size="11" font-family="Liberation Sans" font-weight="normal">a</text>
</svg>
<div class="sel" style="left:513px;top:525px;width:108px;height:22px"><span style="left:6px">美国英语</span><b></b></div>
<div class="sel" style="left:646px;top:526px;width:68px;height:21px"><span style="left:6px">锐利</span><b></b></div>

<!-- context menu -->
<div class="menu">
<div class="m" style="top:3px">图层属性. . .</div>
<div class="m" style="top:22px">混合选项. . .</div>
<div class="s" style="top:42px"></div>
<div class="m" style="top:49px">复制图层. . .</div>
<div class="m" style="top:67px">删除图层</div>
<div class="s" style="top:86px"></div>
<div class="m" style="top:93px">转换为智能对象</div>
<div class="s" style="top:113px"></div>
<div class="m g" style="top:120px">栅格化图层</div>
<div class="s" style="top:140px"></div>
<div class="m g" style="top:147px">启用图层蒙版</div>
<div class="m g" style="top:165px">停用矢量蒙版</div>
<div class="m" style="top:183px">创建剪贴蒙版</div>
<div class="s" style="top:203px"></div>
<div class="m g" style="top:210px">链接图层</div>
<div class="m g" style="top:228px">选择链接图层</div>
<div class="s" style="top:248px"></div>
<div class="m" style="top:255px">选择相似图层</div>
<div class="s" style="top:275px"></div>
<div class="m g" style="top:282px">拷贝图层样式</div>
<div class="m g" style="top:300px">粘贴图层样式</div>
<div class="m g" style="top:318px">清除图层样式</div>
<div class="s" style="top:338px"></div>
<div class="m g" style="top:345px">合并图层</div>
<div class="a" style="left:1px;top:362px;width:122px;height:18px;background:#316ac5"></div>
<div class="m" style="top:363px;color:#fff">合并可见图层</div>
<div class="m" style="top:381px">拼合图像</div>
</div>
<svg style="left:911px;top:548px;z-index:21" width="14" height="20"><path d="M1 1V15L4.500 12L7 18L9.500 17L7 11L12 11Z" fill="#fff" stroke="#000"/></svg>

<!-- IME bar -->
<div class="a" style="left:376px;top:706px;width:140px;height:23px;background:#f2f2f2;border:1px solid #e2e2e2"></div>
<div class="a" style="left:379px;top:709px;width:18px;height:18px;background:#fff;border:1px solid #f47a20;color:#e8401a;font:bold 19px/16px 'Liberation Sans';text-align:center">S</div>
<div class="t" style="left:403px;top:709px;font-size:16px;line-height:17px;color:#2f96dc;font-weight:bold">中</div>
<svg style="left:420px;top:709px" width="95" height="18"><path d="M12 1Q13 12 3 12Q7 17 13 14Q18 8 12 1Z" fill="#3f9bdc"/><circle cx="27.500" cy="8" r="2" fill="none" stroke="#2f80cc" stroke-width="1.200"/><path d="M35 12L33 16" stroke="#2f80cc" stroke-width="1.800"/><rect x="39" y="2" width="16" height="12" fill="#3f9bdc"/><path d="M41 5H53M41 8H53M41 11H50" stroke="#fff" stroke-dasharray="2 1"/><circle cx="67" cy="4" r="2.500" fill="#555"/><path d="M62 17V9Q67 4 71 9V17Z" fill="#555"/><rect x="69" y="10" width="5" height="7" fill="#777"/><path d="M79 16L87 7" stroke="#3f9bdc" stroke-width="3"/><path d="M85 6Q87 1 92 2L89 5L91 7L93 5Q93 10 88 9Z" fill="#3f9bdc"/></svg>

</body></html>
